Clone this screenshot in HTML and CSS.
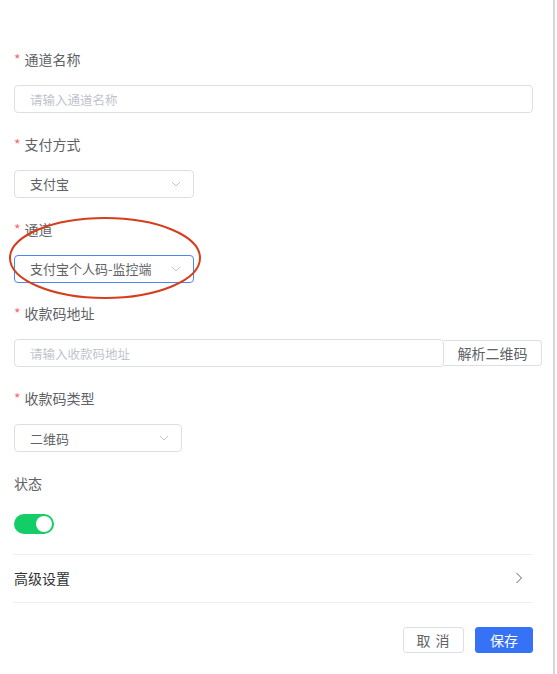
FILE: index.html
```html
<!DOCTYPE html>
<html lang="zh">
<head>
<meta charset="utf-8">
<link rel="stylesheet" href="styles.css">
</head>
<body>
<div class="panel">
  <form class="form">
    <div class="item">
      <label class="label"><span class="req">*</span>通道名称</label>
      <div class="input full"><span class="ph">请输入通道名称</span></div>
    </div>
    <div class="item">
      <label class="label"><span class="req">*</span>支付方式</label>
      <div class="input select w180"><span class="val">支付宝</span><svg class="arrow" width="10" height="6" viewBox="0 0 10 6"><path d="M1 1 L5 5 L9 1" fill="none" stroke="#c0c4cc" stroke-width="1"/></svg></div>
    </div>
    <div class="item">
      <label class="label"><span class="req">*</span>通道</label>
      <div class="input select w180 focus"><span class="val">支付宝个人码-监控端</span><svg class="arrow" width="10" height="6" viewBox="0 0 10 6"><path d="M1 1 L5 5 L9 1" fill="none" stroke="#c0c4cc" stroke-width="1"/></svg></div>
    </div>
    <div class="item">
      <label class="label"><span class="req">*</span>收款码地址</label>
      <div class="group">
        <div class="input grow"><span class="ph">请输入收款码地址</span></div>
        <div class="append">解析二维码</div>
      </div>
    </div>
    <div class="item">
      <label class="label"><span class="req">*</span>收款码类型</label>
      <div class="input select w168"><span class="val">二维码</span><svg class="arrow" width="10" height="6" viewBox="0 0 10 6"><path d="M1 1 L5 5 L9 1" fill="none" stroke="#c0c4cc" stroke-width="1"/></svg></div>
    </div>
    <div class="item last">
      <label class="label">状态</label>
      <div class="switch-row"><span class="switch"><span class="knob"></span></span></div>
    </div>
    <div class="adv">
      <span>高级设置</span>
      <svg width="8" height="12" viewBox="0 0 8 12"><path d="M1.5 1 L6.5 6 L1.5 11" fill="none" stroke="#606266" stroke-width="1"/></svg>
    </div>
    <div class="footer">
      <button type="button" class="btn cancel">取 消</button>
      <button type="button" class="btn primary">保存</button>
    </div>
  </form>
  <svg class="mark" width="200" height="90" viewBox="0 0 200 90"><ellipse cx="100" cy="44" rx="95" ry="40" fill="none" stroke="#d53d1c" stroke-width="2"/></svg>
</div>
</body>
</html>
```
FILE: styles.css
```css
html, body {
  margin: 0;
  padding: 0;
  background: #fff;
}
body {
  font-family: "Noto Sans CJK SC", "Noto Sans", sans-serif;
  color: #606266;
}
.panel {
  position: relative;
  width: 555px;
  height: 674px;
  border-right: 2px solid #d6d6d6;
  box-sizing: border-box;
}
.form {
  padding: 48px 0 0 14px;
  width: 519px;
}
.item {
  margin-bottom: 19.75px;
}
.item.last {
  margin-bottom: 16px;
}
.label {
  display: block;
  height: 22px;
  line-height: 22px;
  font-size: 14px;
  color: #606266;
  margin-bottom: 15px;
}
.req {
  color: #f56c6c;
  margin-right: 4px;
  font-size: 14px;
}
.input {
  box-sizing: border-box;
  height: 28px;
  border: 1px solid #dcdfe6;
  border-radius: 4px;
  display: flex;
  align-items: center;
  padding: 0 12px 0 15px;
  font-size: 13px;
  background: #fff;
}
.full { width: 519px; }
.w180 { width: 180px; }
.w168 { width: 168px; }
.select { justify-content: space-between; }
.focus { border-color: #4d86f0; }
.ph { color: #c0c4cc; font-size: 12.5px; }
.val { color: #606266; }
.group {
  display: flex;
  width: 528px;
}
.grow {
  flex: 1;
  border-radius: 4px;
}
.append {
  box-sizing: border-box;
  width: 98px;
  height: 26px;
  margin-top: 1px;
  border: 1px solid #dcdfe6;
  border-left: none;
  border-radius: 0 4px 4px 0;
  display: flex;
  align-items: center;
  justify-content: center;
  font-size: 14px;
  color: #606266;
}
.switch-row {
  height: 28px;
  display: flex;
  align-items: center;
  padding-top: 1px;
}
.switch {
  width: 40px;
  height: 20px;
  border-radius: 10px;
  background: #13ce66;
  display: flex;
  align-items: center;
  justify-content: flex-end;
  padding: 0 2px;
  box-sizing: border-box;
}
.knob {
  width: 16px;
  height: 16px;
  border-radius: 50%;
  background: #fff;
}
.adv {
  height: 47px;
  border-top: 1px solid #ebeef5;
  border-bottom: 1px solid #ebeef5;
  display: flex;
  align-items: center;
  justify-content: space-between;
  padding-right: 10px;
  font-size: 14px;
  color: #303133;
}
.footer {
  display: flex;
  justify-content: flex-end;
  gap: 11px;
  margin-top: 24px;
}
.btn {
  height: 26px;
  box-sizing: border-box;
  border: 1px solid #dcdfe6;
  border-radius: 3px;
  background: #fff;
  color: #606266;
  font-family: "Noto Sans CJK SC", sans-serif;
  font-size: 14px;
  padding: 0;
  width: 61px;
  line-height: 24px;
}
.btn.cancel { letter-spacing: 1px; }
.btn.primary {
  width: 58px;
  background: #3672f5;
  border-color: #3672f5;
  color: #fff;
}
.mark {
  position: absolute;
  left: 5px;
  top: 214px;
}
```
